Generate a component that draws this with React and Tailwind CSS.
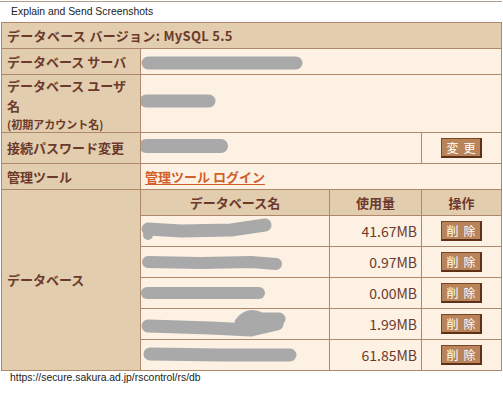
import React from 'react'

const JP = { fontFamily: '"Noto Sans CJK JP", "Noto Sans", sans-serif' }

function Blob({ points, sw = 13, extra }) {
  return (
    <svg className="absolute inset-0 w-full h-full" preserveAspectRatio="none">
      <polyline
        points={points}
        fill="none"
        stroke="#a9a9a9"
        strokeWidth={sw}
        strokeLinecap="round"
        strokeLinejoin="round"
      />
      {extra}
    </svg>
  )
}

function DelButton({ label }) {
  return (
    <button className="w-[41px] h-[20px] bg-[#b9845a] border border-[#7a4628] border-r-2 border-b-2 border-r-[#5c3118] border-b-[#5c3118] text-white text-[12px] leading-none whitespace-nowrap flex items-center justify-center gap-[5px]">
      <span>{label[0]}</span>
      <span>{label[1]}</span>
    </button>
  )
}

const rows = [
  { size: '41.67MB', blob: '7,13 40,15 90,14 124,9', extra: <circle cx="7" cy="19" r="5" fill="#a9a9a9" /> },
  { size: '0.97MB', blob: '7,15 60,16 110,15 135,17', sw: 12 },
  { size: '0.00MB', blob: '6,15 60,15 118,15', sw: 12 },
  {
    size: '1.99MB',
    blob: '7,17 70,19 110,21 136,15',
    extra: <path d="M100,14 Q108,4 120,10 L138,10" fill="none" stroke="#a9a9a9" strokeWidth="13" strokeLinecap="round" />,
  },
  { size: '61.85MB', blob: '9,14 80,15 149,15' },
]

export default function App() {
  const label = 'bg-[#e3cdaf] text-[#6b3a2c] font-bold text-[13px] pl-[5px] flex items-center'
  const cream = 'bg-[#fdf1e4] relative'
  return (
    <div className="w-[503px] h-[393px] bg-white overflow-hidden" style={JP}>
      <div className="mt-px h-px w-[502px] bg-[#b59c88]" />
      <div
        className="h-[20px] pl-[11px] text-[10.4px] leading-[20px] text-[#222]"
        style={{ fontFamily: '"Liberation Sans", Arial, sans-serif' }}
      >
        Explain and Send Screenshots
      </div>

      <div className="ml-px w-[501px] grid grid-cols-[138px_188px_91px_79px] grid-rows-[25px_25px_57px_30px_25px_25px_30px_30px_30px_30px_30px] gap-px p-px bg-[#ae8868]">
        <div className={`${label} col-span-4 tracking-[0.3px]`}>データベース バージョン: MySQL 5.5</div>

        <div className={label}>データベース サーバ</div>
        <div className={`${cream} col-span-3`}>
          <Blob points="7,14 155,14" />
        </div>

        <div className={`${label} flex-col items-start justify-center`}>
          <div className="leading-[20px]">データベース ユーザ<br />名</div>
          <div className="text-[11px] leading-[16px]">(初期アカウント名)</div>
        </div>
        <div className={`${cream} col-span-3`}>
          <Blob points="5,26 68,26" />
        </div>

        <div className={label}>接続パスワード変更</div>
        <div className={`${cream} col-span-2`}>
          <Blob points="5,13 80,13" sw={14} />
        </div>
        <div className="bg-[#fdf1e4] flex items-center justify-center">
          <DelButton label="変更" />
        </div>

        <div className={label}>管理ツール</div>
        <div className="bg-[#fdf1e4] col-span-3 flex items-center pl-[4px]">
          <span className="text-[#d0602a] font-bold text-[13px] underline underline-offset-2">管理ツール ログイン</span>
        </div>

        <div className={`${label} row-span-6`}>データベース</div>
        <div className="bg-[#e3cdaf] text-[#6b3a2c] font-bold text-[13px] flex items-center justify-center">データベース名</div>
        <div className="bg-[#e3cdaf] text-[#6b3a2c] font-bold text-[13px] flex items-center justify-center">使用量</div>
        <div className="bg-[#e3cdaf] text-[#6b3a2c] font-bold text-[13px] flex items-center justify-center">操作</div>

        {rows.map((r, i) => (
          <React.Fragment key={i}>
            <div className={cream}>
              <Blob points={r.blob} sw={r.sw || 13} extra={r.extra} />
            </div>
            <div className="bg-[#fdf1e4] flex items-center justify-end pr-[4px] text-[14px] text-[#6b3a2c]">{r.size}</div>
            <div className="bg-[#fdf1e4] flex items-center justify-center">
              <DelButton label="削除" />
            </div>
          </React.Fragment>
        ))}
      </div>

      <div
        className="pl-[10px] text-[10.4px] leading-[13px] text-[#222]"
        style={{ fontFamily: '"Liberation Sans", Arial, sans-serif' }}
      >
        https://secure.sakura.ad.jp/rscontrol/rs/db
      </div>
    </div>
  )
}
